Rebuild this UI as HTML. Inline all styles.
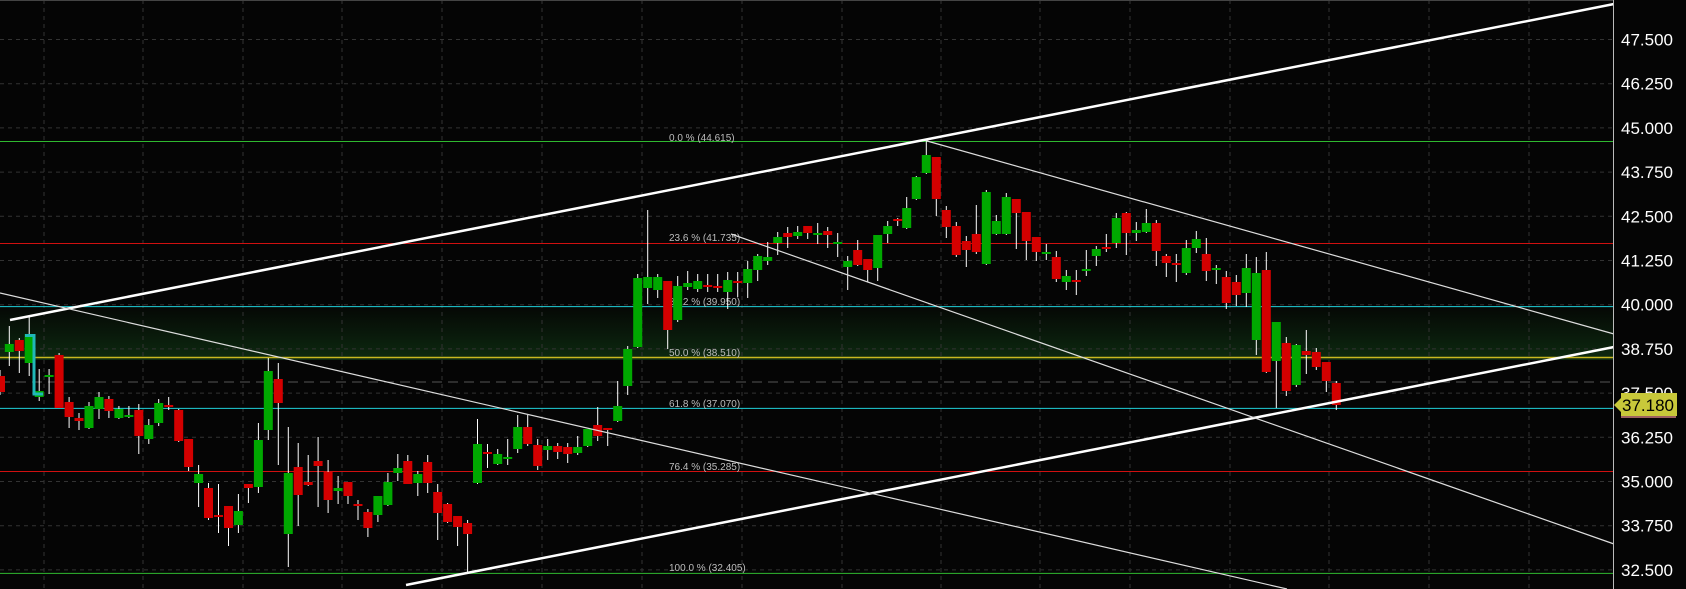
<!DOCTYPE html>
<html><head><meta charset="utf-8"><style>
html,body{margin:0;padding:0;background:#050505;overflow:hidden}
svg{display:block}
.ax{font-family:"Liberation Sans",sans-serif;font-size:17px;fill:#fff}
.fb{font-family:"Liberation Sans",sans-serif;font-size:10px;fill:#bdbdbd}
</style></head><body>
<svg width="1686" height="589" viewBox="0 0 1686 589" xmlns="http://www.w3.org/2000/svg">
<defs><linearGradient id="g" x1="0" y1="0" x2="0" y2="1"><stop offset="0" stop-color="#050805"/><stop offset="1" stop-color="#0d2a10"/></linearGradient></defs>
<rect width="1686" height="589" fill="#050505"/>
<rect x="0" y="307" width="1613" height="53" fill="url(#g)"/>
<g stroke="#333" stroke-width="1" stroke-dasharray="4,4">
<line x1="44" y1="0" x2="44" y2="589"/><line x1="143" y1="0" x2="143" y2="589"/><line x1="243" y1="0" x2="243" y2="589"/><line x1="342" y1="0" x2="342" y2="589"/><line x1="442" y1="0" x2="442" y2="589"/><line x1="542" y1="0" x2="542" y2="589"/><line x1="642" y1="0" x2="642" y2="589"/><line x1="742" y1="0" x2="742" y2="589"/><line x1="842" y1="0" x2="842" y2="589"/><line x1="941" y1="0" x2="941" y2="589"/><line x1="1040" y1="0" x2="1040" y2="589"/><line x1="1130" y1="0" x2="1130" y2="589"/><line x1="1230" y1="0" x2="1230" y2="589"/><line x1="1329" y1="0" x2="1329" y2="589"/><line x1="1429" y1="0" x2="1429" y2="589"/><line x1="1529" y1="0" x2="1529" y2="589"/>
<line x1="0" y1="39.5" x2="1613" y2="39.5"/><line x1="0" y1="83.7" x2="1613" y2="83.7"/><line x1="0" y1="127.9" x2="1613" y2="127.9"/><line x1="0" y1="172.1" x2="1613" y2="172.1"/><line x1="0" y1="216.3" x2="1613" y2="216.3"/><line x1="0" y1="260.5" x2="1613" y2="260.5"/><line x1="0" y1="304.7" x2="1613" y2="304.7"/><line x1="0" y1="348.9" x2="1613" y2="348.9"/><line x1="0" y1="393.1" x2="1613" y2="393.1"/><line x1="0" y1="437.3" x2="1613" y2="437.3"/><line x1="0" y1="481.5" x2="1613" y2="481.5"/><line x1="0" y1="525.7" x2="1613" y2="525.7"/><line x1="0" y1="569.9" x2="1613" y2="569.9"/>
</g>
<line x1="0" y1="382" x2="1613" y2="382" stroke="#555" stroke-dasharray="10,6"/>
<line x1="0" y1="141.5" x2="1613" y2="141.5" stroke="#2fb82f"/>
<line x1="0" y1="243.5" x2="1613" y2="243.5" stroke="#d01010"/>
<line x1="0" y1="306.6" x2="1613" y2="306.6" stroke="#20d0d8"/>
<line x1="0" y1="357.5" x2="1613" y2="357.5" stroke="#c8b820" stroke-width="1.5"/>
<line x1="0" y1="408.4" x2="1613" y2="408.4" stroke="#20d0d8"/>
<line x1="0" y1="471.5" x2="1613" y2="471.5" stroke="#d01010"/>
<line x1="0" y1="573.4" x2="1613" y2="573.4" stroke="#2fb82f"/>
<text class="fb" x="669" y="141">0.0 % (44.615)</text>
<text class="fb" x="669" y="241">23.6 % (41.735)</text>
<text class="fb" x="669" y="305">38.2 % (39.950)</text>
<text class="fb" x="669" y="356">50.0 % (38.510)</text>
<text class="fb" x="669" y="407">61.8 % (37.070)</text>
<text class="fb" x="669" y="470">76.4 % (35.285)</text>
<text class="fb" x="669" y="571">100.0 % (32.405)</text>
<g stroke="#fff" stroke-width="1">
<line x1="0" y1="370" x2="0" y2="395"/><line x1="9.3" y1="326" x2="9.3" y2="366"/><line x1="19.3" y1="338" x2="19.3" y2="373"/><line x1="29.2" y1="317" x2="29.2" y2="376"/><line x1="39.2" y1="369" x2="39.2" y2="401"/><line x1="49.1" y1="369" x2="49.1" y2="394"/><line x1="59.1" y1="353" x2="59.1" y2="408"/><line x1="69.1" y1="397" x2="69.1" y2="428"/><line x1="79" y1="413" x2="79" y2="430"/><line x1="89" y1="402" x2="89" y2="429"/><line x1="99" y1="392" x2="99" y2="419"/><line x1="108.9" y1="396" x2="108.9" y2="418"/><line x1="118.9" y1="406" x2="118.9" y2="419"/><line x1="128.9" y1="406" x2="128.9" y2="418"/><line x1="138.8" y1="404" x2="138.8" y2="454"/><line x1="148.8" y1="419" x2="148.8" y2="444"/><line x1="158.7" y1="399" x2="158.7" y2="426"/><line x1="168.7" y1="397" x2="168.7" y2="410"/><line x1="178.7" y1="409" x2="178.7" y2="442"/><line x1="188.6" y1="439" x2="188.6" y2="471"/><line x1="198.6" y1="465" x2="198.6" y2="507"/><line x1="208.5" y1="483" x2="208.5" y2="520"/><line x1="218.5" y1="484" x2="218.5" y2="533"/><line x1="228.5" y1="506" x2="228.5" y2="546"/><line x1="238.4" y1="494" x2="238.4" y2="533"/><line x1="248.4" y1="484" x2="248.4" y2="503"/><line x1="258.4" y1="423" x2="258.4" y2="493"/><line x1="268.3" y1="358" x2="268.3" y2="440"/><line x1="278.3" y1="363" x2="278.3" y2="465"/><line x1="288.3" y1="427" x2="288.3" y2="567"/><line x1="298.2" y1="443" x2="298.2" y2="526"/><line x1="308.2" y1="455" x2="308.2" y2="486"/><line x1="318.1" y1="437" x2="318.1" y2="507"/><line x1="328.1" y1="460" x2="328.1" y2="513"/><line x1="338.1" y1="476" x2="338.1" y2="504"/><line x1="348" y1="482" x2="348" y2="504"/><line x1="358" y1="500" x2="358" y2="520"/><line x1="367.9" y1="509" x2="367.9" y2="537"/><line x1="377.9" y1="496" x2="377.9" y2="522"/><line x1="387.9" y1="473" x2="387.9" y2="506"/><line x1="397.8" y1="454" x2="397.8" y2="481"/><line x1="407.8" y1="455" x2="407.8" y2="484"/><line x1="417.8" y1="471" x2="417.8" y2="496"/><line x1="427.7" y1="455" x2="427.7" y2="493"/><line x1="437.7" y1="484" x2="437.7" y2="540"/><line x1="447.6" y1="503" x2="447.6" y2="523"/><line x1="457.6" y1="516" x2="457.6" y2="546"/><line x1="467.6" y1="520" x2="467.6" y2="573"/><line x1="477.5" y1="419" x2="477.5" y2="484"/><line x1="487.5" y1="444" x2="487.5" y2="468"/><line x1="497.7" y1="449" x2="497.7" y2="465"/><line x1="507.7" y1="439" x2="507.7" y2="465"/><line x1="517.7" y1="415" x2="517.7" y2="453"/><line x1="527.7" y1="415" x2="527.7" y2="446"/><line x1="537.7" y1="439" x2="537.7" y2="470"/><line x1="547.7" y1="439" x2="547.7" y2="460"/><line x1="557.7" y1="443" x2="557.7" y2="459"/><line x1="567.7" y1="443" x2="567.7" y2="463"/><line x1="577.7" y1="436" x2="577.7" y2="455"/><line x1="587.7" y1="429" x2="587.7" y2="447"/><line x1="597.7" y1="407" x2="597.7" y2="441"/><line x1="607.7" y1="428" x2="607.7" y2="446"/><line x1="617.7" y1="381" x2="617.7" y2="422"/><line x1="627.7" y1="346" x2="627.7" y2="395"/><line x1="637.7" y1="274" x2="637.7" y2="348"/><line x1="647.7" y1="210" x2="647.7" y2="304"/><line x1="657.7" y1="274" x2="657.7" y2="298"/><line x1="667.7" y1="281" x2="667.7" y2="349"/><line x1="677.7" y1="276" x2="677.7" y2="322"/><line x1="687.7" y1="271" x2="687.7" y2="290"/><line x1="697.7" y1="274" x2="697.7" y2="292"/><line x1="707.7" y1="274" x2="707.7" y2="292"/><line x1="717.7" y1="274" x2="717.7" y2="292"/><line x1="727.7" y1="272" x2="727.7" y2="309"/><line x1="737.7" y1="272" x2="737.7" y2="297"/><line x1="747.7" y1="261" x2="747.7" y2="298"/><line x1="757.7" y1="254" x2="757.7" y2="281"/><line x1="767.7" y1="242" x2="767.7" y2="265"/><line x1="777.7" y1="232" x2="777.7" y2="255"/><line x1="787.7" y1="227" x2="787.7" y2="248"/><line x1="797.7" y1="226" x2="797.7" y2="239"/><line x1="807.7" y1="226" x2="807.7" y2="239"/><line x1="817.7" y1="223" x2="817.7" y2="244"/><line x1="827.7" y1="227" x2="827.7" y2="248"/><line x1="837.7" y1="233" x2="837.7" y2="257"/><line x1="847.7" y1="256" x2="847.7" y2="290"/><line x1="857.7" y1="240" x2="857.7" y2="266"/><line x1="867.7" y1="259" x2="867.7" y2="282"/><line x1="877.7" y1="235" x2="877.7" y2="281"/><line x1="887.7" y1="221" x2="887.7" y2="243"/><line x1="897.7" y1="218" x2="897.7" y2="226"/><line x1="906.7" y1="197" x2="906.7" y2="229"/><line x1="916.3" y1="176" x2="916.3" y2="200"/><line x1="926.3" y1="140" x2="926.3" y2="174"/><line x1="936.3" y1="157" x2="936.3" y2="216"/><line x1="946.3" y1="206" x2="946.3" y2="238"/><line x1="956.3" y1="222" x2="956.3" y2="257"/><line x1="966.3" y1="236" x2="966.3" y2="267"/><line x1="976.3" y1="205" x2="976.3" y2="254"/><line x1="986.3" y1="190" x2="986.3" y2="265"/><line x1="996.3" y1="215" x2="996.3" y2="235"/><line x1="1006.3" y1="193" x2="1006.3" y2="235"/><line x1="1016.3" y1="199" x2="1016.3" y2="249"/><line x1="1026.3" y1="212" x2="1026.3" y2="260"/><line x1="1036.3" y1="237" x2="1036.3" y2="261"/><line x1="1046.3" y1="244" x2="1046.3" y2="260"/><line x1="1056.3" y1="251" x2="1056.3" y2="282"/><line x1="1066.3" y1="270" x2="1066.3" y2="290"/><line x1="1076.3" y1="270" x2="1076.3" y2="295"/><line x1="1086.3" y1="250" x2="1086.3" y2="276"/><line x1="1096.3" y1="246" x2="1096.3" y2="266"/><line x1="1106.3" y1="234" x2="1106.3" y2="252"/><line x1="1116.3" y1="213" x2="1116.3" y2="248"/><line x1="1126.3" y1="212" x2="1126.3" y2="255"/><line x1="1136.3" y1="222" x2="1136.3" y2="241"/><line x1="1146.3" y1="209" x2="1146.3" y2="233"/><line x1="1156.3" y1="220" x2="1156.3" y2="266"/><line x1="1166.3" y1="254" x2="1166.3" y2="277"/><line x1="1176.3" y1="254" x2="1176.3" y2="282"/><line x1="1186.3" y1="240" x2="1186.3" y2="275"/><line x1="1196.3" y1="231" x2="1196.3" y2="253"/><line x1="1206.3" y1="238" x2="1206.3" y2="281"/><line x1="1216.3" y1="265" x2="1216.3" y2="284"/><line x1="1226.3" y1="271" x2="1226.3" y2="309"/><line x1="1236.3" y1="275" x2="1236.3" y2="306"/><line x1="1246.3" y1="254" x2="1246.3" y2="307"/><line x1="1256.3" y1="257" x2="1256.3" y2="355"/><line x1="1266.3" y1="252" x2="1266.3" y2="373"/><line x1="1276.3" y1="322" x2="1276.3" y2="408"/><line x1="1286.3" y1="337" x2="1286.3" y2="396"/><line x1="1296.3" y1="344" x2="1296.3" y2="387"/><line x1="1306.3" y1="330" x2="1306.3" y2="374"/><line x1="1316.3" y1="348" x2="1316.3" y2="370"/><line x1="1326.3" y1="362" x2="1326.3" y2="392"/><line x1="1336.3" y1="381" x2="1336.3" y2="410"/>
</g>
<g fill="#d40000">
<rect x="-4" y="376" width="9" height="16"/><rect x="14.8" y="340" width="9" height="11"/><rect x="54.6" y="355" width="9" height="53"/><rect x="64.6" y="402" width="9" height="15"/><rect x="74.5" y="418" width="9" height="3"/><rect x="104.4" y="399" width="9" height="12"/><rect x="134.3" y="410" width="9" height="26"/><rect x="164.2" y="405" width="9" height="2"/><rect x="174.2" y="410" width="9" height="31"/><rect x="184.1" y="439" width="9" height="28"/><rect x="204" y="488" width="9" height="30"/><rect x="214" y="515" width="9" height="2"/><rect x="224" y="506" width="9" height="22"/><rect x="243.9" y="484" width="9" height="4"/><rect x="273.8" y="379" width="9" height="24"/><rect x="293.7" y="467" width="9" height="28"/><rect x="303.7" y="482" width="9" height="3"/><rect x="313.6" y="461" width="9" height="5"/><rect x="323.6" y="472" width="9" height="28"/><rect x="343.5" y="482" width="9" height="14"/><rect x="353.5" y="504" width="9" height="2"/><rect x="363.4" y="512" width="9" height="16"/><rect x="403.3" y="461" width="9" height="23"/><rect x="423.2" y="462" width="9" height="21"/><rect x="433.2" y="492" width="9" height="21"/><rect x="443.1" y="504" width="9" height="18"/><rect x="453.1" y="516" width="9" height="11"/><rect x="463.1" y="523" width="9" height="11"/><rect x="483" y="452" width="9" height="2"/><rect x="523.2" y="427" width="9" height="17"/><rect x="533.2" y="445" width="9" height="21"/><rect x="553.2" y="446" width="9" height="6"/><rect x="563.2" y="447" width="9" height="7"/><rect x="593.2" y="425" width="9" height="11"/><rect x="603.2" y="428" width="9" height="2"/><rect x="663.2" y="281" width="9" height="49"/><rect x="703.2" y="285" width="9" height="2"/><rect x="713.2" y="286" width="9" height="2"/><rect x="733.2" y="281" width="9" height="2"/><rect x="783.2" y="233" width="9" height="4"/><rect x="803.2" y="226" width="9" height="7"/><rect x="823.2" y="231" width="9" height="4"/><rect x="853.2" y="250" width="9" height="15"/><rect x="863.2" y="259" width="9" height="11"/><rect x="893.2" y="219" width="9" height="2"/><rect x="931.8" y="157" width="9" height="42"/><rect x="941.8" y="210" width="9" height="17"/><rect x="951.8" y="226" width="9" height="29"/><rect x="961.8" y="241" width="9" height="9"/><rect x="971.8" y="234" width="9" height="18"/><rect x="1011.8" y="199" width="9" height="14"/><rect x="1021.8" y="212" width="9" height="29"/><rect x="1031.8" y="237" width="9" height="15"/><rect x="1051.8" y="257" width="9" height="22"/><rect x="1071.8" y="280" width="9" height="2"/><rect x="1101.8" y="247" width="9" height="2"/><rect x="1121.8" y="213" width="9" height="20"/><rect x="1151.8" y="223" width="9" height="28"/><rect x="1161.8" y="256" width="9" height="7"/><rect x="1171.8" y="263" width="9" height="2"/><rect x="1201.8" y="254" width="9" height="17"/><rect x="1221.8" y="277" width="9" height="26"/><rect x="1231.8" y="282" width="9" height="13"/><rect x="1261.8" y="270" width="9" height="102"/><rect x="1281.8" y="343" width="9" height="48"/><rect x="1301.8" y="351" width="9" height="4"/><rect x="1311.8" y="352" width="9" height="15"/><rect x="1321.8" y="362" width="9" height="19"/><rect x="1331.8" y="383" width="9" height="22"/>
</g>
<g fill="#00a800">
<rect x="4.8" y="344" width="9" height="8"/><rect x="24.7" y="334" width="9" height="29"/><rect x="34.7" y="391" width="9" height="6"/><rect x="44.6" y="375" width="9" height="2"/><rect x="84.5" y="406" width="9" height="22"/><rect x="94.5" y="397" width="9" height="12"/><rect x="114.4" y="409" width="9" height="9"/><rect x="124.4" y="415" width="9" height="2"/><rect x="144.3" y="425" width="9" height="14"/><rect x="154.2" y="403" width="9" height="20"/><rect x="194.1" y="474" width="9" height="9"/><rect x="233.9" y="511" width="9" height="14"/><rect x="253.9" y="440" width="9" height="47"/><rect x="263.8" y="371" width="9" height="59"/><rect x="283.8" y="473" width="9" height="61"/><rect x="333.6" y="488" width="9" height="3"/><rect x="373.4" y="496" width="9" height="19"/><rect x="383.4" y="482" width="9" height="23"/><rect x="393.3" y="468" width="9" height="5"/><rect x="413.3" y="474" width="9" height="9"/><rect x="473" y="444" width="9" height="39"/><rect x="493.2" y="454" width="9" height="10"/><rect x="503.2" y="457" width="9" height="2"/><rect x="513.2" y="427" width="9" height="22"/><rect x="543.2" y="446" width="9" height="4"/><rect x="573.2" y="447" width="9" height="6"/><rect x="583.2" y="429" width="9" height="17"/><rect x="613.2" y="406" width="9" height="15"/><rect x="623.2" y="349" width="9" height="37"/><rect x="633.2" y="278" width="9" height="69"/><rect x="643.2" y="277" width="9" height="11"/><rect x="653.2" y="277" width="9" height="13"/><rect x="673.2" y="286" width="9" height="34"/><rect x="683.2" y="283" width="9" height="4"/><rect x="693.2" y="281" width="9" height="8"/><rect x="723.2" y="280" width="9" height="12"/><rect x="743.2" y="269" width="9" height="14"/><rect x="753.2" y="256" width="9" height="14"/><rect x="763.2" y="257" width="9" height="4"/><rect x="773.2" y="237" width="9" height="6"/><rect x="793.2" y="232" width="9" height="4"/><rect x="813.2" y="233" width="9" height="2"/><rect x="833.2" y="242" width="9" height="2"/><rect x="843.2" y="261" width="9" height="6"/><rect x="873.2" y="235" width="9" height="33"/><rect x="883.2" y="226" width="9" height="8"/><rect x="902.2" y="208" width="9" height="20"/><rect x="911.8" y="177" width="9" height="22"/><rect x="921.8" y="155" width="9" height="18"/><rect x="981.8" y="192" width="9" height="72"/><rect x="991.8" y="221" width="9" height="13"/><rect x="1001.8" y="197" width="9" height="37"/><rect x="1041.8" y="252" width="9" height="2"/><rect x="1061.8" y="276" width="9" height="6"/><rect x="1081.8" y="269" width="9" height="2"/><rect x="1091.8" y="249" width="9" height="7"/><rect x="1111.8" y="218" width="9" height="25"/><rect x="1131.8" y="230" width="9" height="3"/><rect x="1141.8" y="223" width="9" height="9"/><rect x="1181.8" y="248" width="9" height="25"/><rect x="1191.8" y="239" width="9" height="9"/><rect x="1211.8" y="268" width="9" height="2"/><rect x="1241.8" y="268" width="9" height="25"/><rect x="1251.8" y="273" width="9" height="67"/><rect x="1271.8" y="322" width="9" height="39"/><rect x="1291.8" y="345" width="9" height="40"/>
</g>
<polyline points="25,335.5 34,335.5 34,394 43,394" fill="none" stroke="#20b8b8" stroke-width="3"/>
<g stroke="#fff" fill="none">
<line x1="10" y1="320" x2="1614" y2="4" stroke-width="2.5"/>
<line x1="406" y1="585" x2="1614" y2="347" stroke-width="2.5"/>
<line x1="0" y1="293" x2="1287" y2="589" stroke-width="1.2" stroke="#ddd"/>
<line x1="927" y1="141" x2="1614" y2="334" stroke-width="1.2" stroke="#ddd"/>
<line x1="731" y1="234" x2="1614" y2="544" stroke-width="1.2" stroke="#ddd"/>
</g>
<rect x="1614" y="0" width="72" height="589" fill="#050505"/>
<line x1="1613.5" y1="0" x2="1613.5" y2="589" stroke="#bbb"/>
<line x1="0" y1="0.5" x2="1613" y2="0.5" stroke="#444"/>
<g class="ax">
<text x="1621" y="45.5">47.500</text><text x="1621" y="89.7">46.250</text><text x="1621" y="133.9">45.000</text><text x="1621" y="178.1">43.750</text><text x="1621" y="222.3">42.500</text><text x="1621" y="266.5">41.250</text><text x="1621" y="310.7">40.000</text><text x="1621" y="354.9">38.750</text><text x="1621" y="399.1">37.500</text><text x="1621" y="443.3">36.250</text><text x="1621" y="487.5">35.000</text><text x="1621" y="531.7">33.750</text><text x="1621" y="575.9">32.500</text>
</g>
<line x1="1621" y1="417" x2="1676" y2="417" stroke="#d08080" stroke-width="1.5"/>
<polygon points="1614,405 1621,398 1621,393 1677,393 1677,416 1621,416 1621,412" fill="#c8c83a"/>
<text x="1622" y="411" style="font-family:'Liberation Sans',sans-serif;font-size:17px;fill:#000">37.180</text>
</svg>
</body></html>
